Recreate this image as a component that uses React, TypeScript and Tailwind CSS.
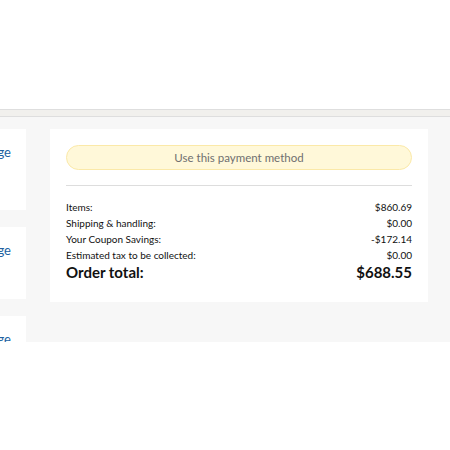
import React from 'react';

const rows = [
  { label: 'Items:', value: '$860.69' },
  { label: 'Shipping & handling:', value: '$0.00' },
  { label: 'Your Coupon Savings:', value: '-$172.14' },
  { label: 'Estimated tax to be collected:', value: '$0.00' },
];

function SideCard({ h }: { h: string }) {
  return (
    <div className={`bg-white shrink-0 ${h} flex justify-end pr-[15px] pt-[14px]`}>
      <span className="text-[13px] leading-[18px] text-[#2162a1]">Change</span>
    </div>
  );
}

export default function App() {
  return (
    <div
      className="w-[450px] h-[450px] bg-white flex flex-col overflow-hidden"
      style={{ fontFamily: 'Lato, "Liberation Sans", sans-serif' }}
    >
      <div className="h-[109px] shrink-0" />
      <div className="h-[8px] shrink-0 bg-[#f1f0ed] border-t border-b border-[#dedede]" />

      {/* checkout body */}
      <div className="h-[225px] shrink-0 bg-[#f7f7f7] overflow-hidden flex items-start gap-[24px] pt-[12px]">
        <div className="w-[200px] -ml-[174px] shrink-0 flex flex-col gap-[17px]">
          <SideCard h="h-[81px]" />
          <SideCard h="h-[72px]" />
          <SideCard h="h-[72px]" />
        </div>

        <div className="w-[378px] h-[173px] shrink-0 bg-white px-[16px] pt-[15px]">
          <button className="w-full h-[25px] rounded-full bg-[#fff8d9] border border-[#fbe9a8] text-[11.5px] text-[#6f6f6f]">
            Use this payment method
          </button>
          <div className="mt-[15px] h-px bg-[#dddddd]" />
          <div className="mt-[13px] flex flex-col text-[10px] text-[#111111]">
            {rows.map((r) => (
              <div key={r.label} className="flex justify-between h-[16px] items-center">
                <span>{r.label}</span>
                <span>{r.value}</span>
              </div>
            ))}
            <div className="flex justify-between items-center h-[18px] text-[15px] font-bold">
              <span>Order total:</span>
              <span>$688.55</span>
            </div>
          </div>
        </div>
      </div>
    </div>
  );
}
